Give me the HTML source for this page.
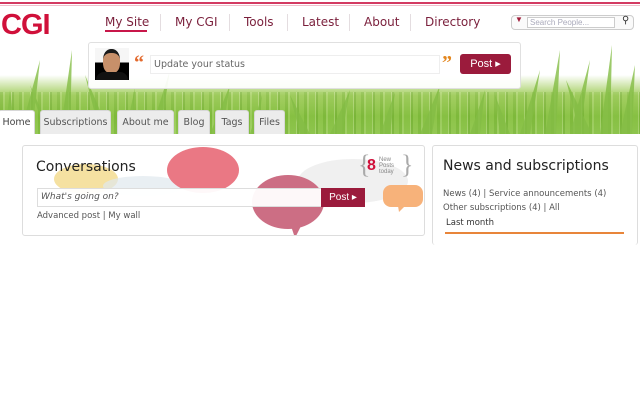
<!DOCTYPE html>
<html><head><meta charset="utf-8"><style>
*{margin:0;padding:0;box-sizing:border-box}
body{width:640px;height:400px;background:#fff;position:relative;overflow:hidden;font-family:"Liberation Sans","DejaVu Sans",sans-serif}
.a{position:absolute}
.nav{top:15px;color:#7a1f3b;font-family:"DejaVu Sans",sans-serif;font-size:12px}
.sep{top:14px;width:1px;height:17px;background:#e4dde0}
.tab{top:110px;height:24px;background:#ececec;border:1px solid #d8d8d8;border-bottom:none;font-family:"DejaVu Sans",sans-serif;font-size:9.5px;color:#555;text-align:center;line-height:24px;border-radius:3px 3px 0 0}
.box{background:#fff;border:1px solid #ddd;border-radius:3px}
</style></head><body>
<div class="a" style="left:0;top:2px;width:640px;height:2px;background:#d33a62"></div>
<div class="a" style="left:0;top:5px;width:640px;height:1px;background:#f0c0cc"></div>
<div class="a" style="left:1px;top:9px;font-size:29px;font-weight:bold;color:#d0103a;letter-spacing:-1px">CGI</div>
<div class="a nav" style="left:105px">My Site</div>
<div class="a" style="left:105px;top:30px;width:42px;height:2px;background:#c8174a"></div>
<div class="a sep" style="left:160px"></div>
<div class="a nav" style="left:175px">My CGI</div>
<div class="a sep" style="left:229px"></div>
<div class="a nav" style="left:244px">Tools</div>
<div class="a sep" style="left:287px"></div>
<div class="a nav" style="left:302px">Latest</div>
<div class="a sep" style="left:349px"></div>
<div class="a nav" style="left:364px">About</div>
<div class="a sep" style="left:410px"></div>
<div class="a nav" style="left:425px">Directory</div>
<div class="a" style="left:511px;top:15px;width:123px;height:15px;border:1px solid #ccc;border-radius:4px;background:#fafafa"></div>
<div class="a" style="left:515px;top:15px;font-size:8px;color:#a01f3c">▼</div>
<div class="a" style="left:527px;top:17px;width:88px;height:11px;border:1px solid #ccc;background:#fff;font-size:8px;color:#aab;line-height:9px;padding-left:2px">Search People...</div>
<div class="a" style="left:622px;top:15px;font-size:10px;color:#333;font-weight:bold">&#9906;</div>
<!-- grass -->
<div class="a" style="left:0;top:75px;width:640px;height:59px;background:linear-gradient(#fff0,#a6cf64 35%,#86c040 70%,#90c650)"></div>
<div class="a" style="left:0;top:92px;width:640px;height:42px;opacity:.3;background:repeating-linear-gradient(90deg,#6aa82c 0 3px,#c8e49a 3px 5px,#88c048 5px 11px,#e0f0c0 11px 12px,#5c9a24 12px 14px,#9ccc5c 14px 19px)"></div>
<svg class="a" style="left:0;top:40px" width="640" height="94">
<g fill="#84bd45" opacity=".8">
<path d="M20 94 L40 20 L32 94Z"/><path d="M60 94 L72 10 L70 94Z"/><path d="M100 94 L85 35 L110 94Z"/><path d="M150 94 L170 30 L160 94Z"/>
<path d="M520 94 L540 30 L530 94Z"/><path d="M545 94 L560 10 L556 94Z"/><path d="M570 94 L590 20 L580 94Z"/><path d="M600 94 L612 5 L610 94Z"/><path d="M620 94 L635 25 L632 94Z"/><path d="M580 94 L566 40 L592 94Z"/><path d="M5 94 L10 50 L15 94Z"/><path d="M210 94 L230 45 L222 94Z"/><path d="M330 94 L350 50 L342 94Z"/><path d="M420 94 L440 45 L432 94Z"/>
<path d="M250 94 L262 55 L258 94Z"/><path d="M300 94 L290 55 L310 94Z"/><path d="M380 94 L395 52 L390 94Z"/><path d="M470 94 L485 50 L480 94Z"/><path d="M500 94 L495 55 L510 94Z"/><path d="M45 94 L30 45 L52 94Z"/><path d="M125 94 L135 48 L132 94Z"/>
</g></svg>
<!-- status panel -->
<div class="a" style="left:88px;top:42px;width:433px;height:47px;background:rgba(255,255,255,.93);border:1px solid #e0e0e0;border-radius:3px"></div>
<div class="a" style="left:95px;top:48px;width:34px;height:32px;background:linear-gradient(#f6f6f6 0 45%,#000 45%)"></div>
<div class="a" style="left:103px;top:49px;width:17px;height:24px;background:#c7906a;border-radius:45% 45% 40% 40%;border-top:4px solid #1a1a1a"></div>
<div class="a" style="left:96px;top:72px;width:32px;height:8px;background:#111;border-radius:8px 8px 0 0"></div>
<div class="a" style="left:134px;top:52px;font-size:20px;color:#e36a2e;font-weight:bold;font-family:'Liberation Serif',serif">&ldquo;</div>
<div class="a" style="left:150px;top:55px;width:290px;height:19px;border:1px solid #eee;background:#fff;font-family:'DejaVu Sans',sans-serif;font-size:9.5px;color:#666;line-height:18px;padding-left:3px">Update your status</div>
<div class="a" style="left:442px;top:52px;font-size:20px;color:#e3861e;font-weight:bold;font-family:'Liberation Serif',serif">&rdquo;</div>
<div class="a" style="left:460px;top:54px;width:51px;height:20px;background:#9b1b3c;border-radius:3px;color:#fff;font-size:11px;line-height:20px;text-align:center">Post ▸</div>
<!-- tabs -->
<div class="a tab" style="left:-2px;width:37px;background:#fff;color:#444">Home</div>
<div class="a tab" style="left:40px;width:71px">Subscriptions</div>
<div class="a tab" style="left:117px;width:57px">About me</div>
<div class="a tab" style="left:178px;width:32px">Blog</div>
<div class="a tab" style="left:215px;width:34px">Tags</div>
<div class="a tab" style="left:254px;width:31px">Files</div>
<!-- conversations -->
<div class="a box" style="left:22px;top:145px;width:403px;height:91px;overflow:hidden">
<svg class="a" style="left:0;top:0" width="403" height="91">
<ellipse cx="63" cy="33" rx="32" ry="15" fill="#f3d98a" opacity=".8"/>
<ellipse cx="120" cy="40" rx="40" ry="10" fill="#dfe8ee" opacity=".7"/>
<ellipse cx="330" cy="35" rx="55" ry="22" fill="#ececec" opacity=".8"/>
<ellipse cx="180" cy="24" rx="36" ry="23" fill="#ea7884"/>
<ellipse cx="265" cy="56" rx="36" ry="27" fill="#cc6e84"/>
<path d="M268 80 L272 92 L278 80Z" fill="#cc6e84"/>
<rect x="360" y="39" width="40" height="22" rx="8" fill="#f7b27a"/>
<path d="M375 60 L376 66 L382 60Z" fill="#f7b27a"/>
</svg>
<div class="a" style="left:13px;top:13px;font-family:'DejaVu Sans',sans-serif;font-size:14px;color:#222">Conversations</div>
<div class="a" style="left:335px;top:6px;font-size:26px;color:#aaa;font-family:'Liberation Serif',serif;line-height:26px">{</div>
<div class="a" style="left:344px;top:11px;font-size:16px;font-weight:bold;color:#d0103a">8</div>
<div class="a" style="left:356px;top:11px;font-size:6px;color:#888;line-height:6px">New<br>Posts<br>today</div>
<div class="a" style="left:378px;top:6px;font-size:26px;color:#aaa;font-family:'Liberation Serif',serif;line-height:26px">}</div>
<div class="a" style="left:14px;top:42px;width:285px;height:19px;background:rgba(255,255,255,.95);border:1px solid #ddd;font-family:'DejaVu Sans',sans-serif;font-size:9px;font-style:italic;color:#555;line-height:17px;padding-left:3px">What's going on?</div>
<div class="a" style="left:298px;top:42px;width:44px;height:19px;background:#9b1b3c;color:#fff;font-size:10px;line-height:19px;text-align:center">Post ▸</div>
<div class="a" style="left:14px;top:65px;font-family:'DejaVu Sans',sans-serif;font-size:8.5px;color:#555">Advanced post | My wall</div>
</div>
<!-- news -->
<div class="a box" style="left:432px;top:145px;width:206px;height:100px;border-bottom:none"></div>
<div class="a" style="left:443px;top:158px;font-family:'DejaVu Sans',sans-serif;font-size:14px;color:#222">News and subscriptions</div>
<div class="a" style="left:443px;top:187px;font-family:'DejaVu Sans',sans-serif;font-size:8.5px;color:#555;line-height:14px">News (4) | Service announcements (4)<br>Other subscriptions (4) | All</div>
<div class="a" style="left:446px;top:218px;font-family:'DejaVu Sans',sans-serif;font-size:8.5px;color:#333">Last month</div>
<div class="a" style="left:445px;top:232px;width:179px;height:2px;background:#e8853a"></div>
</body></html>
